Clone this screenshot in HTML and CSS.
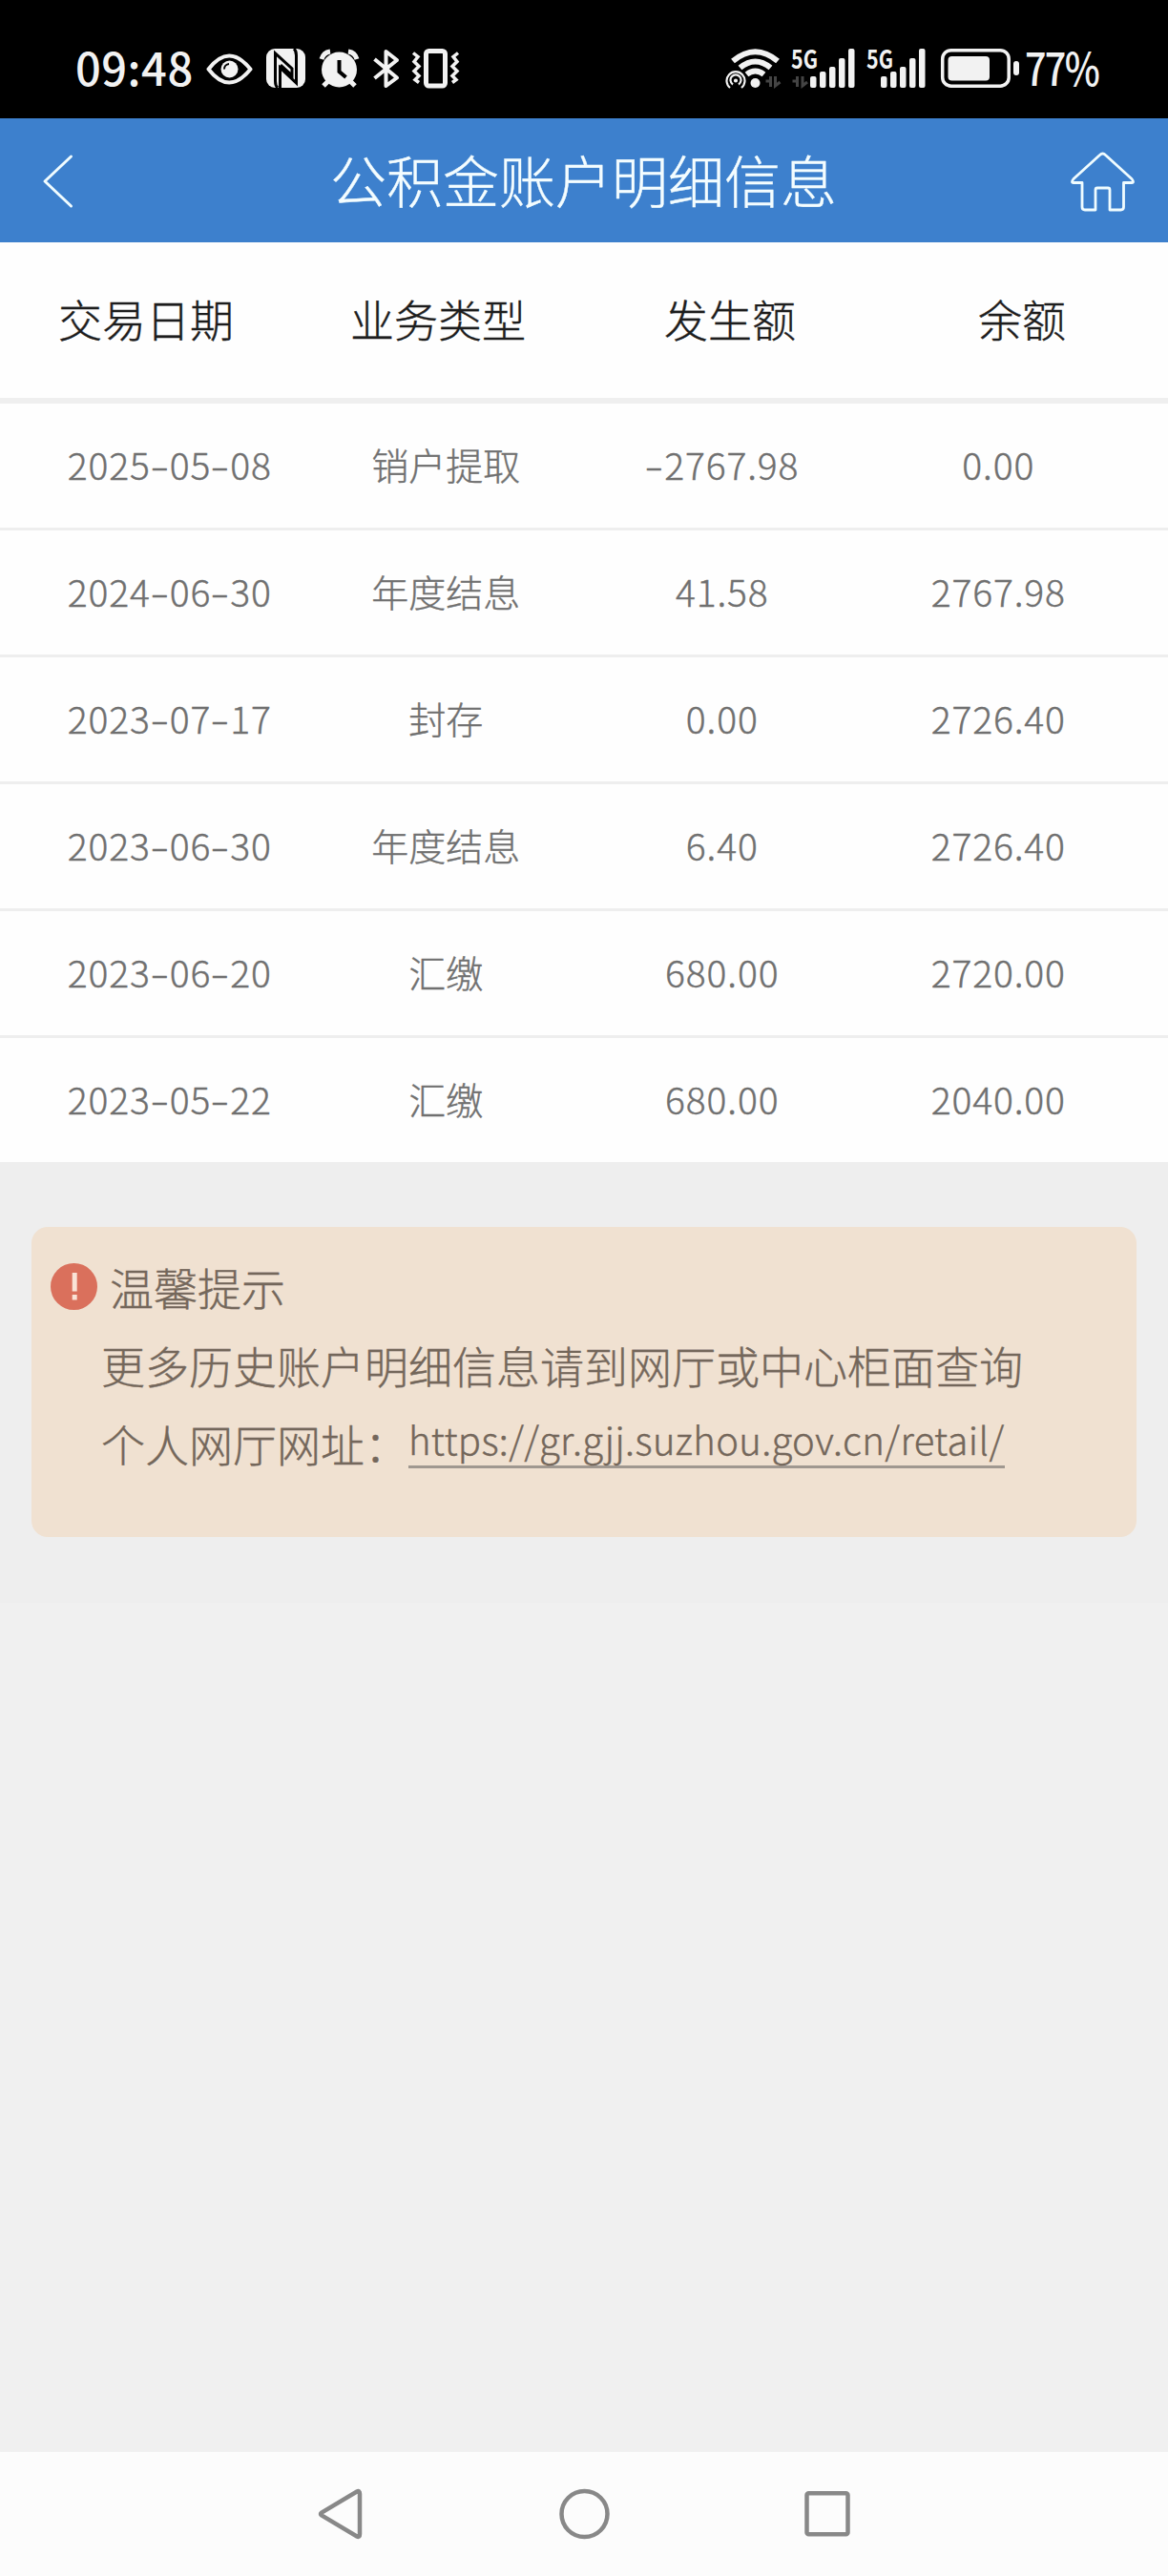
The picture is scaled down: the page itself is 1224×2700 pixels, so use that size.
FILE: index.html
```html
<!DOCTYPE html>
<html lang="zh-CN">
<head>
<meta charset="utf-8">
<title>公积金账户明细信息</title>
<link rel="stylesheet" href="styles.css">
</head>
<body>
<header class="status">
  <span class="clock">09:48</span>
  <svg class="status-left" width="270" height="44" viewBox="214 48 270 44" fill="none" stroke="#f2f2f2" stroke-width="4">
    <path d="M218.500 71.500Q240 43.500 262.500 71.500Q240 99.500 218.500 71.500Z" stroke-linejoin="round"/>
    <circle cx="240.500" cy="71.500" r="9" fill="#f2f2f2" stroke="none"/>
    <path d="M235 71.500a5.500 5.500 0 0 1 5-5.500" stroke="#000" stroke-width="2"/>
    <rect x="279" y="50" width="41" height="41" rx="9" fill="#f2f2f2" stroke="none"/>
    <path d="M291 91Q288.500 89 288.500 84V55L306 71V78L294 67M308 50Q310.500 52 310.500 57V86L293.500 70V91" stroke="#000" stroke-width="3"/>
    <circle cx="355.500" cy="72" r="18.500" fill="#f2f2f2" stroke="none"/>
    <path d="M337 61q2-7 9-8M374 61q-2-7-9-8M344 84l-5 5M367 84l5 5" stroke-width="5"/>
    <path d="M355.500 62v12l7 6" stroke="#000"/>
    <path d="M392.500 61L416 80.500L404.500 89V53L416 62L392.500 81" stroke-linejoin="round"/>
    <rect x="446.500" y="52.500" width="20" height="36.500" rx="3" stroke-width="5"/>
    <path d="M433 55l5 4-4 5 5 5-5 5 5 5-4 4 4 3M480 55l-5 4 4 5-5 5 5 5-5 5 4 4-4 3" transform="translate(0 -.5)" stroke-width="3.500"/>
  </svg>
  <svg class="status-right" width="309" height="44" viewBox="760 48 309 44" fill="none" stroke="#f2f2f2">
    <path d="M768 63Q791.500 43.500 815 63" stroke-width="6"/>
    <path d="M775.500 70Q791.500 57 807.500 70" stroke-width="6"/>
    <path d="M782.500 77Q791.500 70 800.500 77" stroke-width="6"/>
    <circle cx="791.500" cy="86" r="5" fill="#f2f2f2" stroke="none"/>
    <g stroke-width="2.200"><path d="M765 91a9.500 9.500 0 1 1 12 0M768 87.500a5.500 5.500 0 1 1 6 0"/><circle cx="771" cy="83.500" r="1"/></g>
    <path d="M802.500 84h5V79v11M812.500 79v10l5-4M830.500 84h5V79v11M841 79v10l5-4" stroke="#444" stroke-width="3"/>
    <g fill="#f2f2f2" stroke="none">
      <rect x="849" y="79" width="6.500" height="12" rx="2"/><rect x="859" y="74" width="6.500" height="17" rx="2"/><rect x="869" y="69" width="6.500" height="22" rx="2"/><rect x="879" y="60" width="6.500" height="31" rx="2"/><rect x="889" y="50" width="6.500" height="41" rx="2"/>
      <rect x="923" y="79" width="6.500" height="12" rx="2"/><rect x="933" y="74" width="6.500" height="17" rx="2"/><rect x="943" y="69" width="6.500" height="22" rx="2"/><rect x="953" y="60" width="6.500" height="31" rx="2"/><rect x="963" y="50" width="6.500" height="41" rx="2"/>
      <rect x="993.500" y="58" width="43.500" height="25.500" rx="4"/><rect x="1062" y="63" width="6" height="15" rx="3"/>
      <text class="net" x="829" y="70.500" textLength="28" lengthAdjust="spacingAndGlyphs">5G</text>
      <text class="net" x="908" y="70.500" textLength="28" lengthAdjust="spacingAndGlyphs">5G</text>
    </g>
    <rect x="987.700" y="51.700" width="69.500" height="37.500" rx="9" stroke-width="3.500"/>
  </svg>
  <span class="percent">77%</span>
</header>
<nav class="topbar">
  <svg width="80" height="80" viewBox="20 149 80 80" fill="none" stroke="#f0fcff" stroke-width="3" stroke-linecap="round" stroke-linejoin="round"><path d="M74.500 164L47 190L74.500 216"/></svg>
  <h1>公积金账户明细信息</h1>
  <svg width="80" height="80" viewBox="1113 149 80 80" fill="none" stroke="#f0fcff" stroke-width="2.800" stroke-linejoin="round"><path d="M1151.500 162.500q3-3 6 0L1185 187.500q3 4 0 4h-8.500V217q0 3-3 3H1162V199q0-2-2-2H1149q-2 0-2 2V220H1136q-3 0-3-3V191.500H1124q-3 0 0-4Z"/></svg>
</nav>
<main class="page">
  <section class="ledger">
    <div class="head"><span>交易日期</span><span>业务类型</span><span>发生额</span><span>余额</span></div>
    <div class="row"><span class="num">2025<i>-</i>05<i>-</i>08</span><span>销户提取</span><span class="num"><i>-</i>2767.98</span><span class="num">0.00</span></div>
    <div class="row"><span class="num">2024<i>-</i>06<i>-</i>30</span><span>年度结息</span><span class="num">41.58</span><span class="num">2767.98</span></div>
    <div class="row"><span class="num">2023<i>-</i>07<i>-</i>17</span><span>封存</span><span class="num">0.00</span><span class="num">2726.40</span></div>
    <div class="row"><span class="num">2023<i>-</i>06<i>-</i>30</span><span>年度结息</span><span class="num">6.40</span><span class="num">2726.40</span></div>
    <div class="row"><span class="num">2023<i>-</i>06<i>-</i>20</span><span>汇缴</span><span class="num">680.00</span><span class="num">2720.00</span></div>
    <div class="row"><span class="num">2023<i>-</i>05<i>-</i>22</span><span>汇缴</span><span class="num">680.00</span><span class="num">2040.00</span></div>
  </section>
  <section class="notice">
    <div class="tip">
      <div class="tip-title">
        <svg width="49" height="49" viewBox="0 0 49 49"><circle cx="24.500" cy="24.500" r="24.500" fill="#da705c"/><path d="M22.700 10h5v19.500h-5zM22.700 33h5v5.500h-5z" fill="#f9e3d6"/></svg>
        <span>温馨提示</span>
      </div>
      <p>更多历史账户明细信息请到网厅或中心柜面查询</p>
      <p>个人网厅网址：<a class="link">https://gr.gjj.suzhou.gov.cn/retail/</a></p>
    </div>
  </section>
</main>
<footer class="sysnav">
  <svg width="60" height="60" viewBox="328 2605 60 60"><path d="M374 2611.500Q377 2610 377 2614V2656Q377 2660 374 2658.500L337 2636.500Q335 2635 337 2633.500Z"/></svg>
  <svg width="60" height="60" viewBox="582 2605 60 60"><circle cx="611.500" cy="2635" r="24"/></svg>
  <svg width="60" height="60" viewBox="837 2605 60 60"><rect x="845.500" y="2613.300" width="43" height="43" rx="2"/></svg>
</footer>
</body>
</html>
```
FILE: styles.css
```css
* { box-sizing: border-box; }
body {
  margin: 0;
  width: 1224px;
  height: 2700px;
  display: flex;
  flex-direction: column;
  overflow: hidden;
  background: #f0f0f0;
  font-family: "Noto Sans CJK SC", sans-serif;
  font-weight: 300;
  -webkit-text-stroke-width: 0.4px;
}
.status {
  height: 124px;
  flex: none;
  padding: 18px 74px 0 79px;
  display: flex;
  align-items: center;
  background: #000;
  color: #f2f2f2;
  font-weight: 500;
  -webkit-text-stroke-width: 0;
}
.status svg { overflow: visible; }
.clock { width: 135px; padding-bottom: 3px; font-size: 47px; line-height: 60px; letter-spacing: 0.5px; white-space: nowrap; }
.status-left { flex: none; }
.status-right { flex: none; margin-left: auto; }
.percent {
  width: 81px;
  padding: 0 0 3px 5px;
  font-size: 47px;
  line-height: 60px;
  letter-spacing: -2px;
  white-space: nowrap;
  transform: scaleX(0.840);
  transform-origin: 5px 50%;
}
.net { font-size: 27px; font-weight: 700; }
.topbar {
  height: 130px;
  flex: none;
  padding: 0 30px 0 20px;
  display: flex;
  align-items: center;
  justify-content: space-between;
  background: #3d80cd;
}
.topbar h1 {
  margin: 0 0 2px 9px;
  color: #f4fdff;
  font-size: 59px;
  line-height: 80px;
  font-weight: 300;
}
.page { flex: 1; }
.ledger { background: #fefefe; }
.head {
  height: 169px;
  padding-bottom: 6px;
  display: grid;
  grid-template-columns: repeat(4, 1fr);
  align-items: center;
  text-align: center;
  border-bottom: 6px solid #efefef;
  color: #1d1d1d;
  font-size: 46px;
}
.row {
  height: 133px;
  padding: 0 33px 5px;
  display: grid;
  grid-template-columns: repeat(4, 1fr);
  align-items: center;
  text-align: center;
  border-bottom: 3px solid #eee;
  color: #707070;
  font-size: 39px;
}
.num { letter-spacing: 0.900px; }
.row i {
  display: inline-block;
  width: 20px;
  font-style: normal;
  transform: scaleX(1.500);
}
.notice { padding: 65px 33px 69px; background: #eee; }
.tip {
  height: 325px;
  padding: 21px 20px;
  border-radius: 17px;
  background: #f0e1d1;
  color: #74675b;
  font-size: 46px;
  line-height: 82px;
}
.tip-title { display: flex; align-items: center; gap: 13px; }
.tip p { margin: 0 0 0 53px; white-space: nowrap; }
.link {
  display: inline-block;
  height: 54px;
  line-height: 46px;
  font-size: 40px;
  letter-spacing: 0.350px;
  vertical-align: 7px;
  border-bottom: 3px solid #a09890;
}
.sysnav {
  height: 130px;
  flex: none;
  padding: 0 327px 0 328px;
  display: flex;
  align-items: center;
  justify-content: space-between;
  background: #fcfcfc;
}
.sysnav svg { fill: none; stroke: #888; stroke-width: 4.500; }
```
